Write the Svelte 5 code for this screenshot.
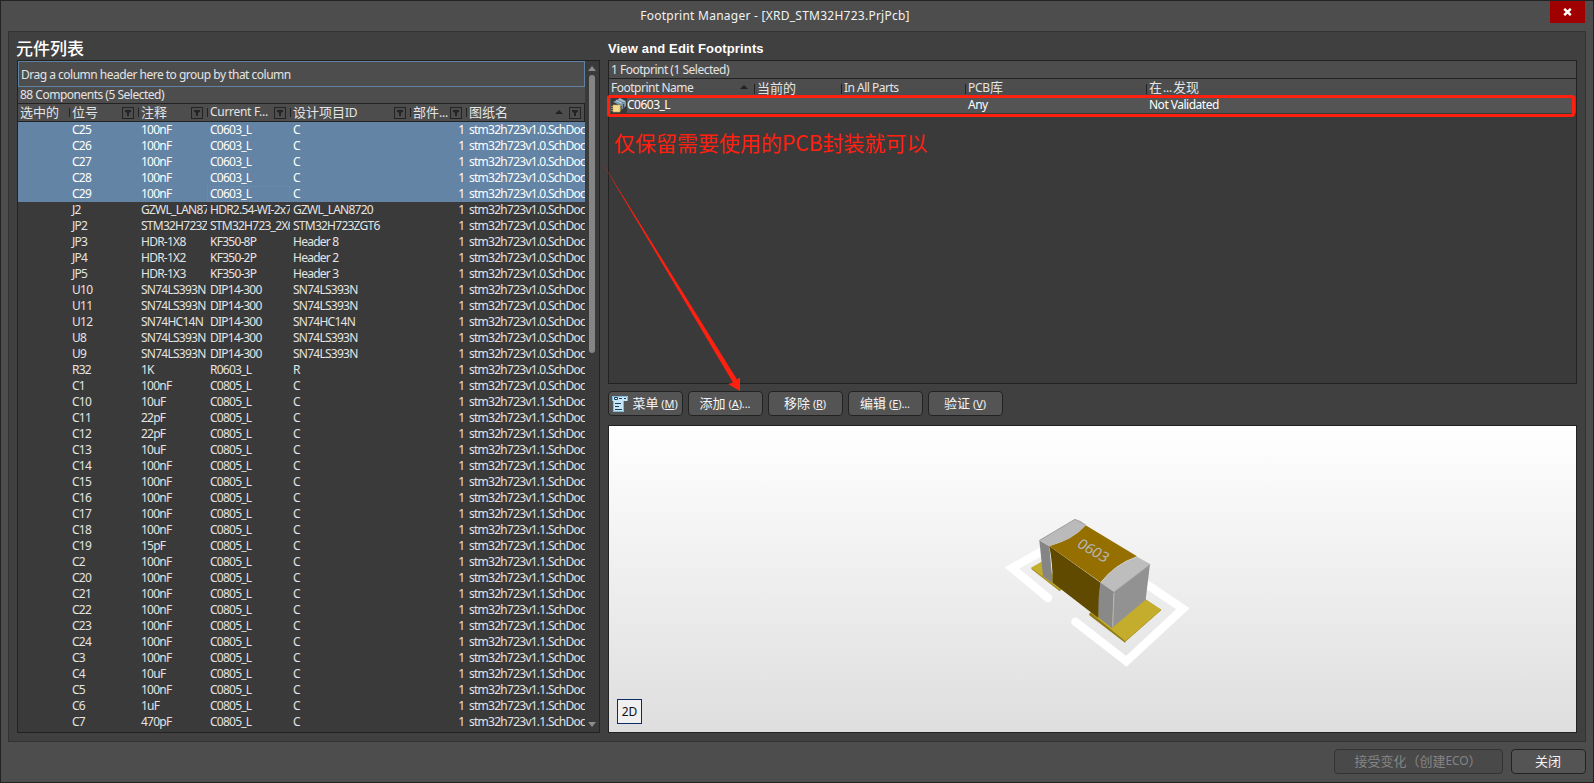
<script>
  const raw = `C25|100nF|C0603_L|C
C26|100nF|C0603_L|C
C27|100nF|C0603_L|C
C28|100nF|C0603_L|C
C29|100nF|C0603_L|C
J2|GZWL_LAN87|HDR2.54-WI-2x7|GZWL_LAN8720
JP2|STM32H723Z|STM32H723_2X6|STM32H723ZGT6
JP3|HDR-1X8|KF350-8P|Header 8
JP4|HDR-1X2|KF350-2P|Header 2
JP5|HDR-1X3|KF350-3P|Header 3
U10|SN74LS393N|DIP14-300|SN74LS393N
U11|SN74LS393N|DIP14-300|SN74LS393N
U12|SN74HC14N|DIP14-300|SN74HC14N
U8|SN74LS393N|DIP14-300|SN74LS393N
U9|SN74LS393N|DIP14-300|SN74LS393N
R32|1K|R0603_L|R
C1|100nF|C0805_L|C
C10|10uF|C0805_L|C
C11|22pF|C0805_L|C
C12|22pF|C0805_L|C
C13|10uF|C0805_L|C
C14|100nF|C0805_L|C
C15|100nF|C0805_L|C
C16|100nF|C0805_L|C
C17|100nF|C0805_L|C
C18|100nF|C0805_L|C
C19|15pF|C0805_L|C
C2|100nF|C0805_L|C
C20|100nF|C0805_L|C
C21|100nF|C0805_L|C
C22|100nF|C0805_L|C
C23|100nF|C0805_L|C
C24|100nF|C0805_L|C
C3|100nF|C0805_L|C
C4|10uF|C0805_L|C
C5|100nF|C0805_L|C
C6|1uF|C0805_L|C
C7|470pF|C0805_L|C`;
  const rows = raw.split('\n').map((line, i) => ({
    cells: line.split('|'),
    sheet: i < 17 ? 'stm32h723v1.0.SchDoc' : 'stm32h723v1.1.SchDoc',
    selected: i < 5,
    focus: i === 4,
  }));
  const buttons = [
    { label: '菜单', key: 'M', tail: '', menu: true },
    { label: '添加', key: 'A', tail: '...' },
    { label: '移除', key: 'R', tail: '' },
    { label: '编辑', key: 'E', tail: '...' },
    { label: '验证', key: 'V', tail: '' },
  ];
</script>

{#snippet filter()}
  <svg class="filter" width="12" height="12" viewBox="0 0 12 12">
    <rect x=".5" y=".5" width="11" height="11" fill="none" stroke="#242424" />
    <path d="M3 3h6v1.500L7 6v3H5V6L3 4.500z" fill="#242424" />
  </svg>
{/snippet}
{#snippet sortUp()}
  <svg class="sort" width="8" height="4" viewBox="0 0 8 4"><path d="M0 4L4 0L8 4z" fill="#222" /></svg>
{/snippet}

<div class="window">
  <header class="titlebar">
    <span class="title">Footprint Manager - [XRD_STM32H723.PrjPcb]</span>
    <button class="close" aria-label="Close">
      <svg width="9" height="8" viewBox="0 0 9 8"><path d="M1.200 .8L7.800 7.200M7.800 .8L1.200 7.200" stroke="#fff" stroke-width="2.400" /></svg>
    </button>
  </header>

  <main>
    <section class="left">
      <h2 class="cjk">元件列表</h2>
      <div class="grid">
        <div class="table">
          <div class="group">Drag a column header here to group by that column</div>
          <div class="count">88 Components (5 Selected)</div>
          <div class="row head cjk">
            <span>选中的</span>
            <span>位号{@render filter()}</span>
            <span>注释{@render filter()}</span>
            <span class="latin">Current F...{@render filter()}</span>
            <span><b>设计项目<i>ID</i></b>{@render filter()}</span>
            <span><b>部件<i>...</i></b>{@render filter()}</span>
            <span>图纸名{@render sortUp()}{@render filter()}</span>
          </div>
          {#each rows as r}
            <div class="row" class:selected={r.selected}>
              <span></span>
              <span>{r.cells[0]}</span>
              <span>{r.cells[1]}</span>
              <span class:focus={r.focus}>{r.cells[2]}</span>
              <span>{r.cells[3]}</span>
              <span class="num">1</span>
              <span class="sheet">{r.sheet}</span>
            </div>
          {/each}
        </div>
        <div class="scroll">
          <svg width="8" height="5" viewBox="0 0 8 5"><path d="M0 5L4 0L8 5z" fill="#8c8c8c" /></svg>
          <div class="thumb"></div>
          <svg width="8" height="5" viewBox="0 0 8 5"><path d="M0 0L4 5L8 0z" fill="#8c8c8c" /></svg>
        </div>
      </div>
    </section>

    <section class="right">
      <h2>View and Edit Footprints</h2>
      <div class="footprints">
        <div class="fcount">1 Footprint (1 Selected)</div>
        <div class="frow fhead">
          <span>Footprint Name{@render sortUp()}</span>
          <span class="cjk">当前的</span>
          <span>In All Parts</span>
          <span class="cjk"><b><i>PCB</i>库</b></span>
          <span class="cjk"><b>在<i class="dots">...</i>发现</b></span>
        </div>
        <div class="frow fsel">
          <span>
            <svg class="ficon" width="16" height="15" viewBox="0 0 16 15">
              <rect width="16" height="15" fill="#383838" />
              <path d="M2 4L9 0L15 3L8 7z" fill="#7d98ab" />
              <path d="M5 2.500L11 5.500M8 1L14 4" stroke="#c4d6e0" />
              <path d="M8 7L15 3V8L9 13z" fill="#8298a6" />
              <path d="M10 8v4M12.500 6v4" stroke="#3b4c58" stroke-width="1.300" />
              <path d="M0 8.500h10M0 10.500h10M0 12.500h10" stroke="#a28a43" />
              <rect x="2" y="7" width="7" height="7" fill="#f3dc92" stroke="#c4a558" stroke-width=".6" />
            </svg>C0603_L</span>
          <span></span><span></span>
          <span>Any</span>
          <span>Not Validated</span>
        </div>
        <p class="note">仅保留需要使用的PCB封装就可以</p>
        <div class="mark"></div>
      </div>

      <div class="buttons">
        {#each buttons as b}
          <button class="btn cjk">
            {#if b.menu}
              <svg width="16" height="16" viewBox="0 0 16 16">
                <rect width="16" height="5" fill="#c5e6f7" />
                <rect x="1" y="5" width="11" height="11" fill="#c5e6f7" />
                <path d="M2.500 1.500h3v2h-3z" fill="#fff" stroke="#1d3d5c" />
                <path d="M7 2.500h3M12 2.500h2M3 7.500h6M3 10.500h4M3 13.500h7" stroke="#1d3d5c" />
                <path d="M.5 5V.5h15V5M1.500 5v10.500h10V5" fill="none" stroke="#82b9d6" />
              </svg>
            {/if}
            <span>{b.label} <i>(<u>{b.key}</u>)</i><i>{b.tail}</i></span>
          </button>
        {/each}
      </div>

      <div class="preview">
        <svg class="model" width="230" height="180" viewBox="0 0 690 540">
          <g fill="none" stroke="#fff" stroke-width="25" stroke-linejoin="miter">
            <path d="M190 151L96 204L204 294" stroke-linecap="round" />
            <path d="M495 250L609 326L439 484L286 365" stroke-linecap="round" />
          </g>
          <path d="M153 206L190 184L245 268L239 274z" fill="#a08c1f" />
          <path d="M153 203L190 182L245 264L240 269z" fill="#c4ad2c" />
          <path d="M328 340L496 298L544 330L436 425L436 429L328 346z" fill="#8f7c18" />
          <path d="M330 337L496 298L544 329L436 424z" fill="#c4ad2c" />
          <path d="M178 121L208 139L218 249L189 229z" fill="#858585" />
          <path d="M208 138L362 248L355 354L218 248Q218 190 208 138z" fill="#5f4a00" />
          <path d="M362 247L402 275L396 384L356 353Q353 285 362 247z" fill="#898989" />
          <path d="M402 275L510 192L497 299L396 384z" fill="#929292" />
          <path d="M317 76L471 169Q405 192 362 247L208 138Q280 119 317 76z" fill="#957000" />
          <path d="M178 120L284 58Q304 60 317 76Q280 119 208 139z" fill="#bababa" />
          <path d="M471 170L510 192L402 276L362 248Q405 192 471 170z" fill="#bdbdbd" />
          <path d="M178 122L285 58L317 75M402 276L510 194" fill="none" stroke="#a3a3a3" stroke-width="3" />
          <path d="M402 278L398 380" stroke="#b8b8b8" stroke-width="3" />
          <text transform="matrix(.87 .5 -.6 .78 288 139)" font-size="44" fill="#b5b5b5">0603</text>
        </svg>
        <button class="two">2D</button>
      </div>
    </section>
  </main>

  <footer>
    <button class="btn cjk wide">接受变化（创建<i>ECO</i>）</button>
    <button class="btn cjk">关闭</button>
  </footer>

  <svg class="arrow" width="142" height="234" viewBox="0 0 142 234">
    <path d="M0 0L133 223.500L128 225L140 232L140 218.500L137 220.500z" fill="#ff2010" />
  </svg>
</div>

<style>
  :global(body) { margin: 0; background: #4d4d4d; }
  * { box-sizing: border-box; }
  .window {
    position: relative; width: 1594px; height: 783px; border: 1px solid #222; background: #4d4d4d;
    font: 12px/16px "Noto Sans", "Noto Sans CJK SC", sans-serif; letter-spacing: -.5px; color: #e4e4e4;
    padding: 0 7px; display: flex; flex-direction: column; overflow: hidden;
  }
  .cjk { font-family: "Noto Sans CJK SC", sans-serif; letter-spacing: 0; }
  i { font: 12px "Noto Sans", sans-serif; letter-spacing: -.25px; }
  b { font-weight: 400; }
  button { font: inherit; color: inherit; padding: 0; border: 0; }
  .titlebar { height: 30px; display: grid; grid-template-columns: 35px 1fr 35px; padding-right: 1px; }
  .title { grid-column: 2; text-align: center; font-size: 12px; letter-spacing: .25px; line-height: 29px; padding-right: 43px; color: #f2f2f2; }
  .close { height: 22px; background: #a00000; display: flex; align-items: center; justify-content: center; }
  main { height: 711px; border: 1px solid #333; background: #404040; display: flex; gap: 8px; padding: 0 8px; }
  h2 { margin: 0; height: 28px; color: #fff; font: bold 13px/33px "Liberation Sans", sans-serif; letter-spacing: .15px; }
  h2.cjk { font: 500 17px/31px "Noto Sans CJK SC", sans-serif; letter-spacing: 0; margin-left: -1px; }
  .left { width: 583px; }
  .right { flex: 1; min-width: 0; }
  .grid { height: 673px; border: 1px solid #222; background: #3a3a3a; display: flex; }
  .table { width: 567px; }
  .group { height: 26px; border: 1px solid #5f82a3; background: #4d4d4d; padding-left: 2px; line-height: 25px; }
  .count { height: 17px; background: #4d4d4d; padding-left: 2px; line-height: 16px; border-bottom: 1px solid #222; }
  .row { display: grid; grid-template-columns: 51px 69px 69px 83px 120px 56px 119px; height: 16px; letter-spacing: -.75px; }
  .row span { overflow: hidden; white-space: nowrap; padding-left: 3px; line-height: 16px; height: 16px; }
  .row span:first-child { padding-left: 2px; }
  .row span.num { text-align: right; padding: 0 1px 0 0; letter-spacing: 0; }
  .row span.sheet { letter-spacing: -.74px; }
  .row.selected { background: #6384a4; color: #fff; }
  .row .focus { border: 1px dotted #b77b4c; padding-left: 2px; line-height: 14px; }
  .row.head { height: 18px; background: #4d4d4d; border-bottom: 1px solid #222; border-right: 1px solid #222; font-size: 13px; letter-spacing: 0; }
  .row.head span { display: flex; align-items: center; position: relative; line-height: 16px; height: 17px; padding-bottom: 1px; overflow: visible; }
  .row.head span + span::before { content: ""; position: absolute; left: 0; top: 4px; height: 9px; width: 1px; background: #222; }
  .row.head .latin { font: 12px/16px "Noto Sans", sans-serif; letter-spacing: -.3px; }
  .filter { margin-left: auto; margin-right: 4px; flex: none; position: relative; top: 1px; }
  .sort { margin-left: auto; flex: none; }
  .sort + .filter { margin-left: 6px; }
  .scroll { width: 14px; display: flex; flex-direction: column; align-items: center; padding: 5px 0 5px; }
  .thumb { width: 6px; height: 278px; border-radius: 3px; background: #858585; margin: 4px 0 auto; }
  .footprints { position: relative; height: 324px; border: 1px solid #222; background: #3a3a3a; }
  .fcount { height: 18px; background: #4d4d4d; border-bottom: 1px solid #222; padding-left: 2px; line-height: 18px; }
  .frow { display: grid; grid-template-columns: 145px 87px 124px 181px 1fr; height: 17px; line-height: 15px; }
  .frow span { position: relative; padding-left: 3px; height: 16px; display: flex; align-items: center; white-space: nowrap; }
  .frow span:first-child { padding-left: 2px; }
  .fhead { background: #4d4d4d; }
  .fhead .cjk { font-size: 13px; }
  .fhead span + span::before { content: ""; position: absolute; left: 0; top: 5px; height: 10px; width: 1px; background: #222; }
  .fhead .sort { margin-right: 6px; }
  .fsel { background: #545454; color: #fff; }
  .fsel span { height: 17px; line-height: 16px; }
  .fsel .ficon { flex: none; position: relative; top: 1px; }
  .dots { margin: 0 1px; }
  .mark { position: absolute; left: -2px; top: 34px; width: 968px; height: 22px; border: 3px solid #ff2010; border-radius: 3px; }
  .note { margin: 13px 0 0 5px; font: 21px/32px "Noto Sans CJK SC", sans-serif; letter-spacing: 0; color: #ff2010; }
  .buttons { display: flex; gap: 5px; padding: 7px 0 9px; }
  .btn { width: 75px; height: 25px; border: 1px solid #222; border-radius: 4px; background: #545454; color: #f5f5f5; font-size: 13px; line-height: 20px; padding: 0 1px 2px 0; display: flex; gap: 4px; align-items: center; justify-content: center; white-space: nowrap; }
  .btn svg { position: relative; top: 1px; }
  .btn i { font-size: 11px; letter-spacing: -.1px; }
  .preview { height: 308px; border: 1px solid #222; background: linear-gradient(#fff, #dedede); position: relative; }
  .model { position: absolute; left: 371px; top: 74px; }
  .two { position: absolute; left: 8px; bottom: 8px; width: 25px; height: 25px; border: 1px solid #0b2a66; background: #f0f0f0; color: #111; }
  footer { display: flex; justify-content: flex-end; gap: 8px; padding-top: 7px; }
  .btn.wide { width: 169px; background: #494949; border-color: #333; color: #858585; gap: 0; }
  .wide i { font-size: 12px; }
  .arrow { position: absolute; left: 599px; top: 158px; pointer-events: none; }
</style>
